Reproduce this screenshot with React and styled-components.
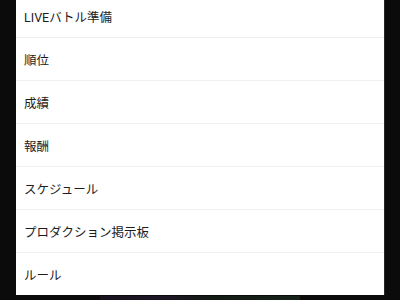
import React from "react";
import styled, { createGlobalStyle } from "styled-components";

const Global = createGlobalStyle`
  html, body {
    margin: 0;
    padding: 0;
    background: #0b0b0b;
    overflow: hidden;
  }
  body {
    font-family: Roboto, "Noto Sans CJK JP", sans-serif;
  }
`;

const Screen = styled.div`
  width: 400px;
  height: 300px;
  display: flex;
  flex-direction: column;
  align-items: center;
  overflow: hidden;
`;

const Menu = styled.ul`
  list-style: none;
  margin: -5px 0 0;
  padding: 0;
  width: 368px;
  background: #ffffff;
  box-shadow: 1px 0 0 #262626;
`;

const Item = styled.li`
  height: 42px;
  display: flex;
  align-items: center;
  padding-left: 8px;
  font-size: 12.5px;
  color: #1c1c1c;
  border-bottom: ${(p) => (p.$last ? "none" : "1px solid #efefef")};
`;

const Strip = styled.div`
  margin-top: 1px;
  width: 200px;
  height: 4px;
  background: linear-gradient(
    90deg,
    #17121d 0%,
    #1d1627 30%,
    #131a15 55%,
    #15221a 100%
  );
`;

const items = [
  "LIVEバトル準備",
  "順位",
  "成績",
  "報酬",
  "スケジュール",
  "プロダクション掲示板",
  "ルール",
];

export default function App() {
  return (
    <Screen>
      <Global />
      <Menu>
        {items.map((label, i) => (
          <Item key={label} $last={i === items.length - 1}>
            {label}
          </Item>
        ))}
      </Menu>
      <Strip />
    </Screen>
  );
}
